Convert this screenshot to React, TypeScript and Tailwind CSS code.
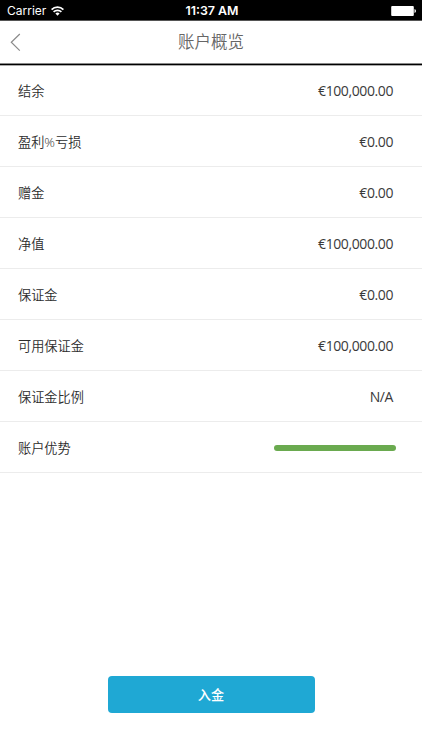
import React from 'react';

const rows: [string, string | null][] = [
  ['结余', '€100,000.00'],
  ['盈利%亏损', '€0.00'],
  ['赠金', '€0.00'],
  ['净值', '€100,000.00'],
  ['保证金', '€0.00'],
  ['可用保证金', '€100,000.00'],
  ['保证金比例', 'N/A'],
  ['账户优势', null],
];

export default function App() {
  return (
    <div className="flex h-[750px] w-[422px] flex-col overflow-hidden bg-white font-['Open_Sans','Noto_Sans_CJK_SC',sans-serif] text-[#3a3a3a]">
      <div className="grid h-[21px] shrink-0 grid-cols-3 items-center border-b border-[#555] bg-black pt-[2px] pr-[5px] pl-[7px] font-['Inter',sans-serif] text-[12px] text-white">
        <div className="flex items-center gap-[5px]">
          <span>Carrier</span>
          <svg width="13" height="10" viewBox="0 0 13 10" fill="none" stroke="white" strokeWidth="1.7">
            <path d="M0.6 3.6a8.400 8.400 0 0 1 11.800 0M2.600 5.900a5.500 5.500 0 0 1 7.800 0" />
            <path d="M6.5 9.8L4.400 7.600a3 3 0 0 1 4.200 0z" fill="white" stroke="none" />
          </svg>
        </div>
        <div className="text-center text-[12.400px] font-semibold">11:37 AM</div>
        <svg className="justify-self-end" width="26" height="10" viewBox="0 0 26 10">
          <rect x="0.2" y="0" width="22.600" height="10" rx="1" fill="white" />
          <path d="M23.500 3v4q1.500-.5 1.500-2t-1.500-2z" fill="white" />
        </svg>
      </div>
      <header className="grid h-[44px] shrink-0 grid-cols-[40px_1fr_40px] items-center border-b border-black shadow-[inset_0_-1px_0_#888,0_1px_0_#aaa]">
        <svg className="ml-[10px]" width="12" height="19" viewBox="0 0 12 19" fill="none" stroke="#8a8a8a" strokeWidth="1.2">
          <path d="M9.800 1L1.300 9.300l8.500 8.300" />
        </svg>
        <h1 className="text-center text-[16.500px] leading-none font-[350] text-[#666]">账户概览</h1>
      </header>
      <main>
        {rows.map(([label, value]) => (
          <div key={label} className="flex h-[51px] items-center justify-between border-b border-[#ececec] pt-[2px] pr-[29px] pl-[18px] text-[13.200px]">
            <span className="pt-[2px] font-[350] text-[#2c2c2c]">{label}</span>
            {value ? (
              <span className="pb-[2px] text-[14px] tracking-[-0.4px]">{value}</span>
            ) : (
              <span className="-mr-[3px] h-[6px] w-[122px] rounded-full bg-[#6aaa4f]" />
            )}
          </div>
        ))}
      </main>
      <button className="mt-auto mb-[37px] h-[37px] w-[207px] self-center rounded-[4px] bg-[#1fa8d4] pt-[2px] text-[13.200px] font-medium text-white">入金</button>
    </div>
  );
}
